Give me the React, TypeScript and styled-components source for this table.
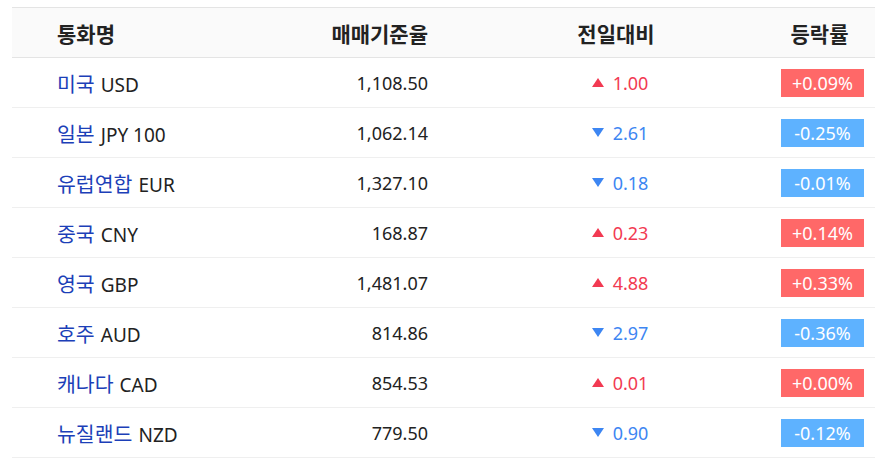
import React from 'react';
import styled, { createGlobalStyle } from 'styled-components';

const GlobalStyle = createGlobalStyle`
  html, body {
    margin: 0;
    padding: 0;
    background: #ffffff;
  }
  body {
    font-family: "Noto Sans", "Noto Sans CJK KR", sans-serif;
    color: #222222;
  }
`;

type Rate = {
    country: string;
    code: string;
    rate: string;
    change: string;
    up: boolean;
    pct: string;
};

const rates: Rate[] = [
    { country: '미국', code: 'USD', rate: '1,108.50', change: '1.00', up: true, pct: '+0.09%' },
    { country: '일본', code: 'JPY 100', rate: '1,062.14', change: '2.61', up: false, pct: '-0.25%' },
    { country: '유럽연합', code: 'EUR', rate: '1,327.10', change: '0.18', up: false, pct: '-0.01%' },
    { country: '중국', code: 'CNY', rate: '168.87', change: '0.23', up: true, pct: '+0.14%' },
    { country: '영국', code: 'GBP', rate: '1,481.07', change: '4.88', up: true, pct: '+0.33%' },
    { country: '호주', code: 'AUD', rate: '814.86', change: '2.97', up: false, pct: '-0.36%' },
    { country: '캐나다', code: 'CAD', rate: '854.53', change: '0.01', up: true, pct: '+0.00%' },
    { country: '뉴질랜드', code: 'NZD', rate: '779.50', change: '0.90', up: false, pct: '-0.12%' },
];

const Wrapper = styled.div`
  padding: 7px 0 0 12px;
`;

const Table = styled.div`
  border-top: 1px solid #e4e4e4;
`;

const Row = styled.div<{ $head?: boolean }>`
  display: grid;
  grid-template-columns: 216px 200px 252px 1fr;
  align-items: center;
  height: 49px;
  border-bottom: 1px solid ${p => (p.$head ? '#e4e4e4' : '#efefef')};
  background: ${p => (p.$head ? '#fafafa' : '#ffffff')};
  font-size: ${p => (p.$head ? '21px' : '18px')};
  font-weight: ${p => (p.$head ? 700 : 400)};
`;

const NameCell = styled.div`
  padding-left: 45px;
  white-space: nowrap;
  font-size: 19px;
`;

const Country = styled.span`
  color: #1c3fb8;
  font-size: 20.5px;
  margin-right: 6px;
`;

const RateCell = styled.div`
  text-align: right;
`;

const ChangeCell = styled.div<{ $up?: boolean }>`
  display: flex;
  justify-content: center;
  align-items: center;
  gap: 9px;
  padding-left: 132px;
  color: ${p => (p.$up ? '#f23a52' : '#3d86f2')};
`;

const ChangeHead = styled(ChangeCell)`
  color: #222222;
  padding-left: 124px;
`;

const HeadName = styled(NameCell)`
  font-size: 21px;
`;

const Arrow = styled.span<{ $up: boolean }>`
  width: 0;
  height: 0;
  border-left: 6px solid transparent;
  border-right: 6px solid transparent;
  ${p =>
        p.$up
            ? 'border-bottom: 9px solid #f23a52;'
            : 'border-top: 9px solid #3d86f2;'}
`;

const PctCell = styled.div`
  display: flex;
  justify-content: flex-end;
  padding-right: 11px;
`;

const PctHead = styled.span`
  width: 83px;
  margin-right: 3px;
  text-align: center;
  white-space: nowrap;
`;

const Badge = styled.span<{ $up: boolean }>`
  width: 83px;
  height: 28px;
  line-height: 28px;
  text-align: center;
  color: #ffffff;
  font-size: 18px;
  background: ${p => (p.$up ? '#ff6868' : '#5eb2ff')};
`;

export default function App() {
    return (
        <Wrapper>
            <GlobalStyle />
            <Table>
                <Row $head>
                    <HeadName>통화명</HeadName>
                    <RateCell>매매기준율</RateCell>
                    <ChangeHead>전일대비</ChangeHead>
                    <PctCell>
                        <PctHead>등락률</PctHead>
                    </PctCell>
                </Row>
                {rates.map(r => (
                    <Row key={r.code}>
                        <NameCell>
                            <Country>{r.country}</Country>
                            {r.code}
                        </NameCell>
                        <RateCell>{r.rate}</RateCell>
                        <ChangeCell $up={r.up}>
                            <Arrow $up={r.up} />
                            {r.change}
                        </ChangeCell>
                        <PctCell>
                            <Badge $up={r.up}>{r.pct}</Badge>
                        </PctCell>
                    </Row>
                ))}
            </Table>
        </Wrapper>
    );
}
